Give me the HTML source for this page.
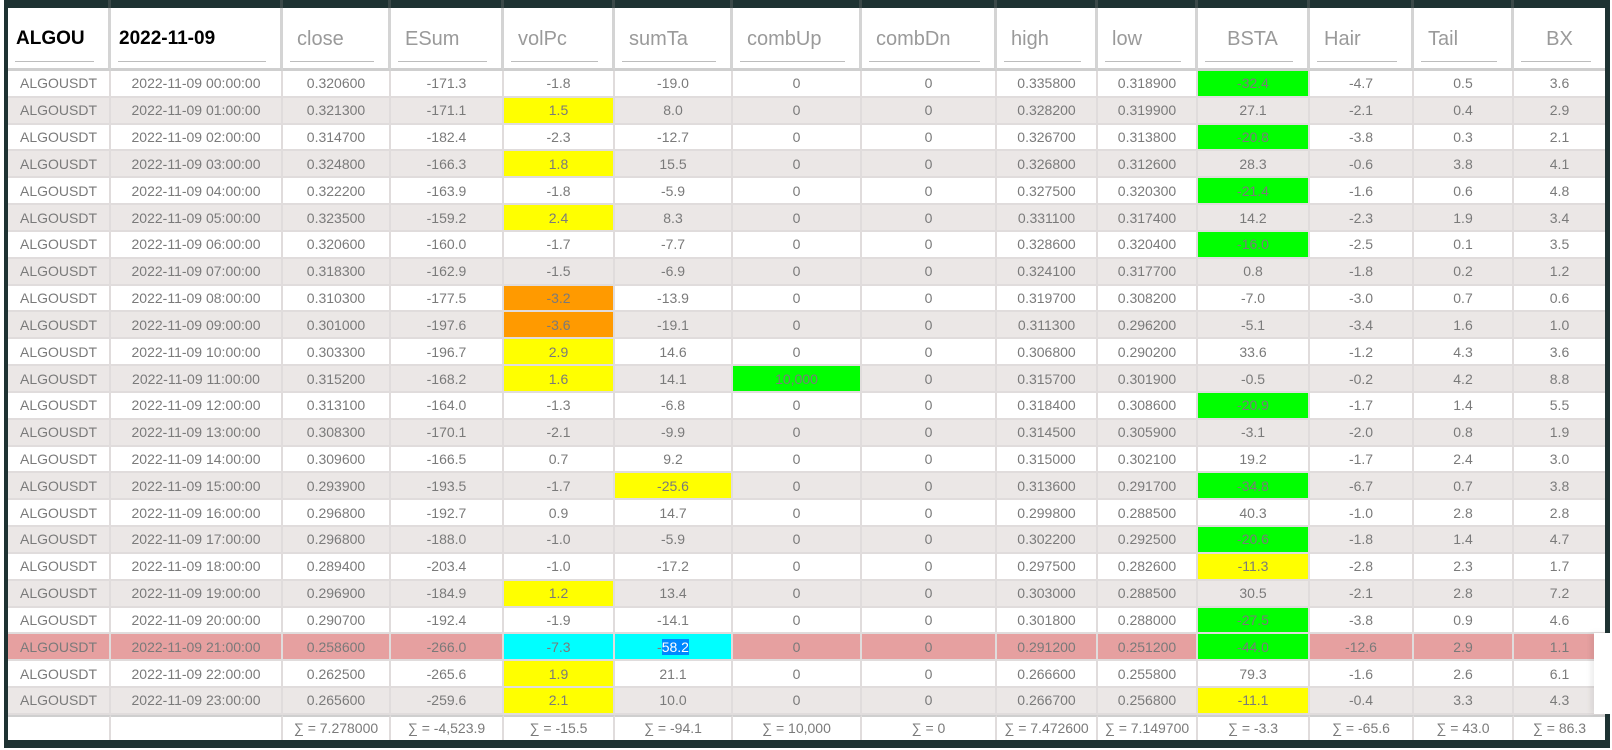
<!DOCTYPE html>
<html><head><meta charset="utf-8"><style>
html,body{margin:0;padding:0;}
body{width:1612px;height:750px;background:#fff;position:relative;overflow:hidden;font-family:"Liberation Sans",sans-serif;}
#frame{position:absolute;left:4px;top:0;width:1606px;height:748px;background:#1e3232;}
table{position:absolute;left:8px;top:8px;border-collapse:separate;border-spacing:0;table-layout:fixed;width:1597px;background:#fff;}
td,th{padding:0;box-sizing:border-box;text-align:center;color:#7a7a7a;font-size:14px;font-weight:normal;white-space:nowrap;overflow:hidden;border-right:2px solid #e0dcdc;border-bottom:2px solid #e0dcdc;}
td:last-child,th:last-child{border-right:none;}
th{height:63px;border-bottom:3px solid #cfcfcf;border-right:3px solid #d4d4d4;position:relative;overflow:visible;text-align:left;font-size:20px;color:#9a9a9a;vertical-align:top;}
th span{position:absolute;left:7px;right:14px;top:53px;border-bottom:1px solid #bdbdbd;}
th b{position:absolute;left:14px;top:20px;font-weight:normal;}
th.c b{left:0;right:0;text-align:center;}
th.k b{color:#000;font-weight:bold;font-size:19px;left:8px;}
th::before{content:"";position:absolute;right:-3px;top:-8px;width:3px;height:8px;background:#3a4848;}
th:last-child::before{display:none;}
tbody tr{height:26.83px;}
tbody tr:nth-child(even){background:#ebe7e6;}
tr.p{background:#e6a0a0 !important;}
tfoot td{height:25px;border-top:2px solid #cfcfcf;border-bottom:none;background:#fff;}
.y{background:#ffff00;}.o{background:#ff9a00;}.g{background:#00ff00;}.c2{background:#00ffff;}
.sel{background:#0088ff;color:#fff;}
#wb{position:absolute;left:1594px;top:633px;width:18px;height:81px;background:#fff;box-shadow:-3px 0 6px rgba(0,0,0,0.08);}
</style></head><body>
<div id="frame"></div>
<table>
<colgroup><col style="width:103px"><col style="width:172px"><col style="width:108px"><col style="width:113px"><col style="width:111px"><col style="width:118px"><col style="width:129px"><col style="width:135px"><col style="width:101px"><col style="width:100px"><col style="width:112px"><col style="width:104px"><col style="width:100px"><col style="width:91px"></colgroup>
<thead><tr>
<th class="k"><b>ALGOU</b><span></span></th>
<th class="k"><b>2022-11-09</b><span></span></th>
<th><b>close</b><span></span></th>
<th><b>ESum</b><span></span></th>
<th><b>volPc</b><span></span></th>
<th><b>sumTa</b><span></span></th>
<th><b>combUp</b><span></span></th>
<th><b>combDn</b><span></span></th>
<th><b>high</b><span></span></th>
<th><b>low</b><span></span></th>
<th class="c"><b>BSTA</b><span></span></th>
<th><b>Hair</b><span></span></th>
<th><b>Tail</b><span></span></th>
<th class="c"><b>BX</b><span></span></th>
</tr></thead>
<tbody>
<tr><td>ALGOUSDT</td><td>2022-11-09 00:00:00</td><td>0.320600</td><td>-171.3</td><td>-1.8</td><td>-19.0</td><td>0</td><td>0</td><td>0.335800</td><td>0.318900</td><td class="g">-32.4</td><td>-4.7</td><td>0.5</td><td>3.6</td></tr>
<tr><td>ALGOUSDT</td><td>2022-11-09 01:00:00</td><td>0.321300</td><td>-171.1</td><td class="y">1.5</td><td>8.0</td><td>0</td><td>0</td><td>0.328200</td><td>0.319900</td><td>27.1</td><td>-2.1</td><td>0.4</td><td>2.9</td></tr>
<tr><td>ALGOUSDT</td><td>2022-11-09 02:00:00</td><td>0.314700</td><td>-182.4</td><td>-2.3</td><td>-12.7</td><td>0</td><td>0</td><td>0.326700</td><td>0.313800</td><td class="g">-20.8</td><td>-3.8</td><td>0.3</td><td>2.1</td></tr>
<tr><td>ALGOUSDT</td><td>2022-11-09 03:00:00</td><td>0.324800</td><td>-166.3</td><td class="y">1.8</td><td>15.5</td><td>0</td><td>0</td><td>0.326800</td><td>0.312600</td><td>28.3</td><td>-0.6</td><td>3.8</td><td>4.1</td></tr>
<tr><td>ALGOUSDT</td><td>2022-11-09 04:00:00</td><td>0.322200</td><td>-163.9</td><td>-1.8</td><td>-5.9</td><td>0</td><td>0</td><td>0.327500</td><td>0.320300</td><td class="g">-21.4</td><td>-1.6</td><td>0.6</td><td>4.8</td></tr>
<tr><td>ALGOUSDT</td><td>2022-11-09 05:00:00</td><td>0.323500</td><td>-159.2</td><td class="y">2.4</td><td>8.3</td><td>0</td><td>0</td><td>0.331100</td><td>0.317400</td><td>14.2</td><td>-2.3</td><td>1.9</td><td>3.4</td></tr>
<tr><td>ALGOUSDT</td><td>2022-11-09 06:00:00</td><td>0.320600</td><td>-160.0</td><td>-1.7</td><td>-7.7</td><td>0</td><td>0</td><td>0.328600</td><td>0.320400</td><td class="g">-16.0</td><td>-2.5</td><td>0.1</td><td>3.5</td></tr>
<tr><td>ALGOUSDT</td><td>2022-11-09 07:00:00</td><td>0.318300</td><td>-162.9</td><td>-1.5</td><td>-6.9</td><td>0</td><td>0</td><td>0.324100</td><td>0.317700</td><td>0.8</td><td>-1.8</td><td>0.2</td><td>1.2</td></tr>
<tr><td>ALGOUSDT</td><td>2022-11-09 08:00:00</td><td>0.310300</td><td>-177.5</td><td class="o">-3.2</td><td>-13.9</td><td>0</td><td>0</td><td>0.319700</td><td>0.308200</td><td>-7.0</td><td>-3.0</td><td>0.7</td><td>0.6</td></tr>
<tr><td>ALGOUSDT</td><td>2022-11-09 09:00:00</td><td>0.301000</td><td>-197.6</td><td class="o">-3.6</td><td>-19.1</td><td>0</td><td>0</td><td>0.311300</td><td>0.296200</td><td>-5.1</td><td>-3.4</td><td>1.6</td><td>1.0</td></tr>
<tr><td>ALGOUSDT</td><td>2022-11-09 10:00:00</td><td>0.303300</td><td>-196.7</td><td class="y">2.9</td><td>14.6</td><td>0</td><td>0</td><td>0.306800</td><td>0.290200</td><td>33.6</td><td>-1.2</td><td>4.3</td><td>3.6</td></tr>
<tr><td>ALGOUSDT</td><td>2022-11-09 11:00:00</td><td>0.315200</td><td>-168.2</td><td class="y">1.6</td><td>14.1</td><td class="g">10,000</td><td>0</td><td>0.315700</td><td>0.301900</td><td>-0.5</td><td>-0.2</td><td>4.2</td><td>8.8</td></tr>
<tr><td>ALGOUSDT</td><td>2022-11-09 12:00:00</td><td>0.313100</td><td>-164.0</td><td>-1.3</td><td>-6.8</td><td>0</td><td>0</td><td>0.318400</td><td>0.308600</td><td class="g">-20.9</td><td>-1.7</td><td>1.4</td><td>5.5</td></tr>
<tr><td>ALGOUSDT</td><td>2022-11-09 13:00:00</td><td>0.308300</td><td>-170.1</td><td>-2.1</td><td>-9.9</td><td>0</td><td>0</td><td>0.314500</td><td>0.305900</td><td>-3.1</td><td>-2.0</td><td>0.8</td><td>1.9</td></tr>
<tr><td>ALGOUSDT</td><td>2022-11-09 14:00:00</td><td>0.309600</td><td>-166.5</td><td>0.7</td><td>9.2</td><td>0</td><td>0</td><td>0.315000</td><td>0.302100</td><td>19.2</td><td>-1.7</td><td>2.4</td><td>3.0</td></tr>
<tr><td>ALGOUSDT</td><td>2022-11-09 15:00:00</td><td>0.293900</td><td>-193.5</td><td>-1.7</td><td class="y">-25.6</td><td>0</td><td>0</td><td>0.313600</td><td>0.291700</td><td class="g">-34.8</td><td>-6.7</td><td>0.7</td><td>3.8</td></tr>
<tr><td>ALGOUSDT</td><td>2022-11-09 16:00:00</td><td>0.296800</td><td>-192.7</td><td>0.9</td><td>14.7</td><td>0</td><td>0</td><td>0.299800</td><td>0.288500</td><td>40.3</td><td>-1.0</td><td>2.8</td><td>2.8</td></tr>
<tr><td>ALGOUSDT</td><td>2022-11-09 17:00:00</td><td>0.296800</td><td>-188.0</td><td>-1.0</td><td>-5.9</td><td>0</td><td>0</td><td>0.302200</td><td>0.292500</td><td class="g">-20.6</td><td>-1.8</td><td>1.4</td><td>4.7</td></tr>
<tr><td>ALGOUSDT</td><td>2022-11-09 18:00:00</td><td>0.289400</td><td>-203.4</td><td>-1.0</td><td>-17.2</td><td>0</td><td>0</td><td>0.297500</td><td>0.282600</td><td class="y">-11.3</td><td>-2.8</td><td>2.3</td><td>1.7</td></tr>
<tr><td>ALGOUSDT</td><td>2022-11-09 19:00:00</td><td>0.296900</td><td>-184.9</td><td class="y">1.2</td><td>13.4</td><td>0</td><td>0</td><td>0.303000</td><td>0.288500</td><td>30.5</td><td>-2.1</td><td>2.8</td><td>7.2</td></tr>
<tr><td>ALGOUSDT</td><td>2022-11-09 20:00:00</td><td>0.290700</td><td>-192.4</td><td>-1.9</td><td>-14.1</td><td>0</td><td>0</td><td>0.301800</td><td>0.288000</td><td class="g">-27.5</td><td>-3.8</td><td>0.9</td><td>4.6</td></tr>
<tr class="p"><td>ALGOUSDT</td><td>2022-11-09 21:00:00</td><td>0.258600</td><td>-266.0</td><td class="c2">-7.3</td><td class="c2">-<span class="sel">58.2</span></td><td>0</td><td>0</td><td>0.291200</td><td>0.251200</td><td class="g">-44.0</td><td>-12.6</td><td>2.9</td><td>1.1</td></tr>
<tr><td>ALGOUSDT</td><td>2022-11-09 22:00:00</td><td>0.262500</td><td>-265.6</td><td class="y">1.9</td><td>21.1</td><td>0</td><td>0</td><td>0.266600</td><td>0.255800</td><td>79.3</td><td>-1.6</td><td>2.6</td><td>6.1</td></tr>
<tr><td>ALGOUSDT</td><td>2022-11-09 23:00:00</td><td>0.265600</td><td>-259.6</td><td class="y">2.1</td><td>10.0</td><td>0</td><td>0</td><td>0.266700</td><td>0.256800</td><td class="y">-11.1</td><td>-0.4</td><td>3.3</td><td>4.3</td></tr>
</tbody>
<tfoot><tr><td></td><td></td><td>∑ = 7.278000</td><td>∑ = -4,523.9</td><td>∑ = -15.5</td><td>∑ = -94.1</td><td>∑ = 10,000</td><td>∑ = 0</td><td>∑ = 7.472600</td><td>∑ = 7.149700</td><td>∑ = -3.3</td><td>∑ = -65.6</td><td>∑ = 43.0</td><td>∑ = 86.3</td></tr></tfoot>
</table>
<div id="wb"></div>
</body></html>
